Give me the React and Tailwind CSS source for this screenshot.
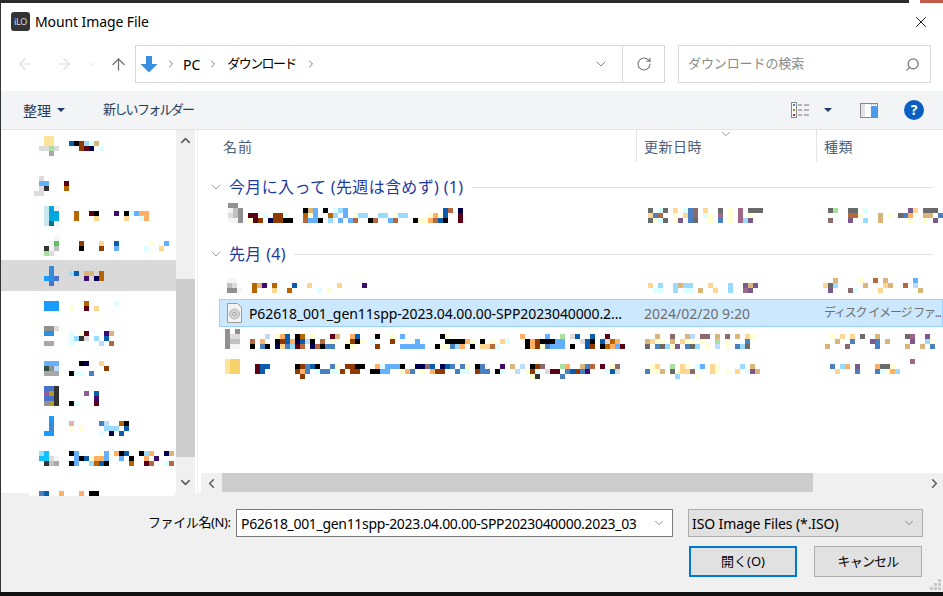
import React from 'react';
import { ArrowLeft, ArrowRight, ArrowUp, ChevronDown, ChevronRight, ChevronLeft, ChevronUp, RotateCw, Search, X } from 'lucide-react';

const PAL = {
  k: '#000000', b: '#0b5cad', l: '#9adcff', c: '#dcffff', o: '#b86400', r: '#8f3b00', m: '#5c0018',
  p: '#ffd592', y: '#ffffd6', n: '#00004f', s: '#64b0ff', t: '#b5673f', T: '#d9b57a', P: '#ffb066',
  g: '#a8a8a8', G: '#dcdcdc', d: '#333333', e: '#a8e0a0', v: '#3f0a6e', S: '#4a7fc0', L: '#bcdcff',
  D: '#6a6a6a', B: '#8a6a6a', M: '#a0668a', V: '#7a5a8a',
  1: '#f5f5f5', 2: '#c0c0c0', 3: '#909090', 4: '#2a90e0', 5: '#00a8e0', 6: '#c8e8f0', 7: '#0a7090',
  8: '#ffe49a', 9: '#f7d26a', a: '#3a8ad8', f: '#1a9cff', h: '#2f4f3f', i: '#dbb4b4', j: '#b39a20',
  q: '#8e5e9c', u: '#4a72c8', x: '#60c060', z: '#10c0ff',
};

const Pixels = ({ rows, className = '' }) => (
  <div className={`shrink-0 ${className}`}>
    {rows.map((row, i) => (
      <div key={i} className="flex h-[5px]">
        {[...row].map((c, j) => (
          <span key={j} className="w-[5px] h-[5px] shrink-0" style={c === '.' ? undefined : { background: PAL[c] }} />
        ))}
      </div>
    ))}
  </div>
);

const NAV_ROWS = [
  { h: 'h-[46px]', icon: ['.88.', '.88.', 'GGeG', '..g.'], iconCls: 'mt-[6px] ml-[38px]', text: ['bkrlcT.', '..rmn.c'], textCls: 'mt-[11px] ml-[10px]' },
  { h: 'h-[30px]', icon: ['.G.', '.ss', '.Gd', 'GG.'], iconCls: 'ml-[33px]', text: ['m', 'o'], textCls: 'mt-[5px] ml-[15px]' },
  { h: 'h-[30px]', icon: ['651', '655', '655', '671'], iconCls: 'ml-[43px]', text: ['o..mk...v.kcsPP', 'o...p.....p..cP'], textCls: 'mt-[5px] ml-[15px]' },
  { h: 'h-[24px]', icon: ['..1', '.1x', 'd12', 'eG.'], iconCls: 'ml-[43px]', text: ['r...p..b......y..s', 'k...r..s.....c..p.'], textCls: 'mt-[5px] ml-[20px]' },
  { h: 'h-[31px]', selected: true, icon: ['.a.', '.a.', 'f4u', '.u.'], iconCls: 'mt-[6px] ml-[43px]', text: ['lb.TT.o', '...v.no'], textCls: 'mt-[11px] ml-[10px]' },
  { h: 'h-[35px]', icon: ['fff', 'fff'], iconCls: 'mt-[10px] ml-[43px]', text: ['...o.....c', 'y..m.p....'], textCls: 'mt-[10px] ml-[10px]' },
  { h: 'h-[35px]', icon: ['33G', '44.', '...', 'gg.'], iconCls: 'ml-[43px]', text: ['c.ym...vT', 'cldG.l.b.', 'c.....L.t'], textCls: 'mt-[5px] ml-[10px]' },
  { h: 'h-[25px]', icon: ['sss', 'h3L', 'ggg'], iconCls: 'ml-[43px]', text: ['..kn..p.', '.......r', 'kcc.S...'], textCls: 'ml-[10px]' },
  { h: 'h-[30px]', icon: ['uud', 'qjd', 'uud', '3jd'], iconCls: 'ml-[43px]', text: ['...q.b', '.....v', 'kc...m'], textCls: 'mt-[5px] ml-[10px]' },
  { h: 'h-[35px]', icon: ['.f.', '.a.', '.a.', 'ff.'], iconCls: 'ml-[43px]', text: ['i.....SL..ok', 'y.y....lll.b', '......c.n.b.'], textCls: 'mt-[5px] ml-[10px]' },
  { h: 'h-[40px]', icon: ['lz..', 'zzG1', '.d2g'], iconCls: 'ml-[38px]', text: ['ks....ys.Pkb..klP..nT', '.skbyPPs..s.k..P.v...', 'ks..lobk....o..mt..ct'], textCls: 'ml-[10px]' },
];

const FILE_ROWS = {
  first: {
    icon: ['33.', '123', 'G23', '113'],
    name: [
      '...........kTs.k.cls...................bt.n',
      'mm.c.rrc...oys..ol.s.yll..ll.yll....yPyb..m',
      'ymr.nrrkk..tssk.l.s.st..kt..st...kyyPtbk..m',
    ],
    date: ['D.cD.p.cSB.p..D.y.M.DDD', 'pSt..y.pSB.cy.M.y.M.y..', 'DycD.yV.SD..y.S.y.MlV..'],
    type: ['De..DD.c........Vp.DDD', '....tty...T.y.DSP..TT.S', 'B...V..l..T.....y..y.V'],
  },
  second: {
    icon: ['11.', '2G.', '331'],
    name: ['oTv.o...b..p.....p....v', 'o...p..o.....c.y.......'],
    date: ['p.l..lTll...p...l..VTV', '.cc..l.cc.T..p..l..MV.'],
    type: ['..T....y..t.T.....s', 'pDl.....T...pT..t.L', '.V...Bc....p.......T'],
  },
  third: {
    icon: ['3.3', '3GG', '322', '311'],
    name: [
      '...L.yPb.ko.y...mT..Pb...k..y.s.......ky..............P....s..e.Gb..b..m',
      't.P..krbPnbLk.t.y..yrky.c...r....s.....kkkkPy.k.y.pc...kPrkkkss...Gbk.bGoP',
      'k.Sk.npSlmt.ntkSS..ky....r....sssss..kyySlP.k.pptc.....kPrySsss.k..br.koPsm',
    ],
    date: ['..T..B..TL.BB.T.B.T.py', 'Tpyy.T.pyy.y..e.y...S', 'D.SDlyV.SDl.y.L.y.SlD'],
    type: ['.y.p.p.D..T.....DM..V', '..T..S...VS.T....V..ly', 'T...B.....S.....T..T.S'],
  },
  fourth: {
    icon: ['899', '899', '899'],
    name: [
      'mbb.....krSbk..Sy.rrkk..Pcsssk..nnBb.nbS.Sy.kS...v.T.L.krB...eP..TSt.m.yB',
      'mb......rPS.cSSccr.rr..kkss..yPS.y.Prr..Scc.rSS.kc..L.yrc.Gmm.SbrSv...cbG',
      '.........r.............................................yd....S',
    ],
    date: ['.yp..e.py.cs.py....l.T', 'SyyT.DyppB...py.y.p.cVT', '......l...y'],
    type: ['................M', 'S.lP.V...PDDy', '.p...S...ScyPl'],
  },
};

const FileRow = ({ row, cls }) => (
  <div className="h-[27px] flex items-start shrink-0">
    <div className="w-[437px] flex items-start shrink-0">
      <Pixels rows={row.icon} className={cls.icon} />
      <Pixels rows={row.name} className={cls.name} />
    </div>
    <div className="w-[180px] shrink-0"><Pixels rows={row.date} className={cls.date} /></div>
    <div className="flex-1 min-w-0 overflow-hidden"><Pixels rows={row.type} className={cls.type} /></div>
  </div>
);

const GroupHeader = ({ label, className = '' }) => (
  <div className={`flex items-center pl-[9px] shrink-0 ${className}`}>
    <ChevronDown size={16} strokeWidth={1} className="text-[#6d6d6d] shrink-0" />
    <span className="ml-[5px] text-[16px] tracking-[0.35px] text-[#1e3a9e] whitespace-nowrap">{label}</span>
    <div className="ml-[8px] h-px flex-1 bg-[#e2e2e2] mr-[10px]" />
  </div>
);

const LogoIcon = () => (
  <div className="w-[19px] h-[19px] rounded-[3px] bg-[#333] flex items-center justify-center text-[9px] text-[#ddd] tracking-tight leading-none">iLO</div>
);

const DownloadArrow = () => (
  <svg width="18" height="18" viewBox="0 0 18 18" className="shrink-0">
    <path d="M6 1h6v8h5.5L9 17.5.5 9H6z" fill="#3a8fe0" />
  </svg>
);

const ViewsIcon = () => (
  <svg width="19" height="16" viewBox="0 0 19 16">
    <rect x="0.5" y="0.5" width="5" height="15" fill="#fff" stroke="#888" />
    <rect x="2" y="2" width="2" height="2" fill="#3a8fd0" />
    <rect x="2" y="7" width="2" height="2" fill="#8a8a30" />
    <rect x="2" y="12" width="2" height="2" fill="#b03020" />
    <path d="M7 3h4M13 3h5M7 8h4M13 8h5M7 13h4M13 13h5" stroke="#777" />
  </svg>
);

const PreviewIcon = () => (
  <svg width="18" height="15" viewBox="0 0 18 15">
    <rect x="0.5" y="0.5" width="17" height="14" fill="#fff" stroke="#888" />
    <rect x="1" y="1" width="4" height="13" fill="#e3e3e3" />
    <rect x="11" y="3" width="6" height="11" fill="#4a9be8" />
    <path d="M11 1.5h6" stroke="#8fb8e0" strokeDasharray="1 1" />
  </svg>
);

const DiscFile = () => (
  <svg width="15" height="20" viewBox="0 0 15 20" className="shrink-0">
    <path d="M.5.5h10l4 4v15H.5z" fill="#f4f4f4" stroke="#9a9a9a" />
    <circle cx="7.5" cy="11" r="5" fill="#d4d4d4" stroke="#b5b5b5" />
    <circle cx="7.5" cy="11" r="1.6" fill="#f4f4f4" stroke="#999" />
  </svg>
);

const Caret = ({ className = '' }) => (
  <svg width="8" height="4" viewBox="0 0 8 4" className={className}>
    <path d="M0 0h8L4 4z" fill="#1f3a66" />
  </svg>
);

const Grip = () => (
  <svg width="12" height="12" viewBox="0 0 12 12" className="absolute right-[1px] bottom-[1px]">
    <path d="M8 0h3v3H8zM4 4h3v3H4zM8 4h3v3H8zM0 8h3v3H0zM4 8h3v3H4zM8 8h3v3H8z" fill="#c8c8c8" />
  </svg>
);

export default function App() {
  return (
    <div className="w-[943px] h-[596px] overflow-hidden flex flex-col bg-white text-black font-['Noto_Sans','Noto_Sans_CJK_JP',sans-serif]">
      {/* window behind */}
      <div className="h-[3px] shrink-0 flex bg-[#2b2b2b]">
        <div className="flex-1" />
        <div className="w-[11px] bg-white" />
        <div className="w-[23px] bg-[#c4594a]" />
      </div>

      <div className="flex-1 min-h-0 flex flex-col border-l border-[#333]">
        {/* Title bar */}
        <div className="h-[38px] shrink-0 flex items-center pl-[10px] pr-[13px] pb-[1px]">
          <LogoIcon />
          <span className="ml-[5px] text-[14px] tracking-[-0.1px]">Mount Image File</span>
          <X size={18} strokeWidth={1.2} className="ml-auto" />
        </div>

        {/* Navigation bar */}
        <div className="h-[50px] shrink-0 flex items-start pt-[4px]">
          <div className="w-[134px] h-[38px] flex items-center shrink-0">
            <ArrowLeft size={18} strokeWidth={1.5} className="ml-[15px] text-[#dcdcdc]" />
            <ArrowRight size={18} strokeWidth={1.5} className="ml-[21px] text-[#dcdcdc]" />
            <ChevronDown size={11} strokeWidth={1.5} className="ml-[14px] text-[#dcdcdc]" />
            <ArrowUp size={19} strokeWidth={1.6} className="ml-[11px] text-[#707070]" />
          </div>
          <div className="w-[530px] h-[38px] border border-[#d9d9d9] flex items-center shrink-0">
            <div className="ml-[4px]"><DownloadArrow /></div>
            <ChevronRight size={12} strokeWidth={1.8} className="ml-[7px] text-[#707070]" />
            <span className="ml-[6px] text-[14px]">PC</span>
            <ChevronRight size={12} strokeWidth={1.8} className="ml-[7px] text-[#707070]" />
            <span className="ml-[8px] text-[13px] tracking-[-1.6px] whitespace-nowrap">ダウンロード</span>
            <ChevronRight size={12} strokeWidth={1.8} className="ml-[9px] text-[#707070]" />
            <ChevronDown size={16} strokeWidth={1.3} className="ml-auto mr-[13px] text-[#707070]" />
            <div className="w-[42px] h-full border-l border-[#d9d9d9] flex items-center justify-center">
              <RotateCw size={16} strokeWidth={1.6} className="text-[#777]" />
            </div>
          </div>
          <div className="ml-[13px] w-[253px] h-[38px] border border-[#d9d9d9] flex items-center px-[9px] shrink-0">
            <span className="text-[13px] tracking-[-0.1px] text-[#8a8a8a] whitespace-nowrap">ダウンロードの検索</span>
            <Search size={15} strokeWidth={2} className="ml-auto mr-[1px] text-[#777] -scale-x-100" />
          </div>
        </div>

        {/* Toolbar */}
        <div className="h-[39px] shrink-0 flex items-center bg-[#f3f4f6] border-b border-[#e3e3e3] text-[#1f3a5a]">
          <span className="ml-[22px] text-[14px]">整理</span>
          <Caret className="ml-[6px]" />
          <span className="ml-[38px] text-[13px] tracking-[-1.7px] whitespace-nowrap">新しいフォルダー</span>
          <div className="ml-auto flex items-center">
            <ViewsIcon />
            <Caret className="ml-[14px]" />
            <div className="ml-[28px]"><PreviewIcon /></div>
            <div className="ml-[26px] mr-[19px] w-[20px] h-[20px] rounded-full bg-[#0a5fc0] text-white text-[14px] font-bold flex items-center justify-center leading-none">?</div>
          </div>
        </div>

        {/* Body */}
        <div className="h-[363px] shrink-0 flex">
          {/* Nav pane */}
          <div className="w-[175px] shrink-0 bg-white">
            {NAV_ROWS.map((r, i) => (
              <div key={i} className={`${r.h} flex items-start overflow-hidden ${r.selected ? 'bg-[#d9d9d9]' : ''}`}>
                <Pixels rows={r.icon} className={r.iconCls} />
                <Pixels rows={r.text} className={r.textCls} />
              </div>
            ))}
            <div className="relative z-10 h-[5px] ml-[28px] w-[146px] bg-white">
              <Pixels rows={['Sb..P...P.kk']} className="ml-[10px]" />
            </div>
          </div>

          {/* Nav scrollbar */}
          <div className="w-[19px] shrink-0 bg-[#f0f0f0] flex flex-col items-center">
            <div className="h-[20px] flex items-center"><ChevronUp size={15} strokeWidth={2.6} className="text-[#606060]" /></div>
            <div className="h-[129px]" />
            <div className="h-[178px] w-full bg-[#cdcdcd]" />
            <div className="flex-1 flex items-end pb-[3px]"><ChevronDown size={15} strokeWidth={2.6} className="text-[#606060]" /></div>
          </div>
          <div className="w-[3px] shrink-0 border-r border-[#f0f0f0] mr-[1px]" />

          {/* File pane */}
          <div className="flex-1 min-w-0 flex flex-col">
            <div className="h-[32px] shrink-0 flex relative">
              <div className="w-[437px] pl-[24px] text-[14px] text-[#4c607a] flex items-center tracking-[1px]">名前</div>
              <div className="w-[180px] border-l border-[#e5e5e5] pl-[7px] text-[14px] text-[#4c607a] flex items-center tracking-[0.5px]">更新日時</div>
              <div className="flex-1 border-l border-[#e5e5e5] pl-[7px] text-[14px] text-[#4c607a] flex items-center tracking-[0.5px]">種類</div>
              <ChevronDown size={14} strokeWidth={1} className="absolute left-[520px] -top-[3px] text-[#555]" />
            </div>
            <div className="flex-1 min-h-0 flex flex-col overflow-hidden">
              <GroupHeader label="今月に入って (先週は含めず) (1)" className="h-[28px] mt-[11px]" />
              <FileRow row={FILE_ROWS.first} cls={{ icon: 'ml-[29px] mt-[2px]', name: 'ml-[5px] mt-[7px]', date: 'ml-[12px] mt-[7px]', type: 'ml-[12px] mt-[7px]' }} />
              <GroupHeader label="先月 (4)" className="h-[28px] mt-[12px]" />
              <div className="h-[4px] shrink-0" />
              <FileRow row={FILE_ROWS.second} cls={{ icon: 'ml-[28px] mt-[6px]', name: 'ml-[10px] mt-[11px]', date: 'ml-[12px] mt-[11px]', type: 'ml-[7px] mt-[6px]' }} />
              <div className="ml-[20px] h-[28px] shrink-0 flex items-center bg-[#cce8ff] border border-[#99d1ff] whitespace-nowrap text-[14px]">
                <div className="w-[417px] flex items-center shrink-0">
                  <div className="ml-[7px]"><DiscFile /></div>
                  <span className="ml-[7px] tracking-[-0.1px]">P62618_001_gen11spp-2023.04.00.00-SPP2023040000.2...</span>
                </div>
                <span className="w-[180px] pl-[7px] text-[#6d6d6d] shrink-0">2024/02/20 9:20</span>
                <span className="pl-[7px] text-[#6d6d6d] text-[12px] tracking-[-1.2px]">ディスク イメージ ファ...</span>
              </div>
              <FileRow row={FILE_ROWS.third} cls={{ icon: 'ml-[26px] mt-[2px]', name: 'ml-[10px] mt-[7px]', date: 'ml-[9px] mt-[7px]', type: 'ml-[9px] mt-[7px]' }} />
              <FileRow row={FILE_ROWS.fourth} cls={{ icon: 'ml-[26px] mt-[5px]', name: 'ml-[15px] mt-[10px]', date: 'ml-[9px] mt-[10px]', type: 'ml-[14px] mt-[5px]' }} />
            </div>
            {/* Horizontal scrollbar */}
            <div className="h-[20px] shrink-0 ml-[2px] flex bg-[#f0f0f0]">
              <div className="w-[21px] flex items-center justify-center"><ChevronLeft size={15} strokeWidth={2.6} className="text-[#606060]" /></div>
              <div className="w-[591px] h-[19px] bg-[#cdcdcd]" />
              <div className="flex-1 flex items-center justify-end pr-[1px]"><ChevronRight size={15} strokeWidth={2.6} className="text-[#606060]" /></div>
            </div>
          </div>
        </div>

        {/* Footer */}
        <div className="flex-1 min-h-0 bg-[#f0f0f0] relative pt-[16px]">
          <div className="flex items-center h-[28px]">
            <span className="ml-[147px] w-[88px] text-[13px] tracking-[-0.4px] whitespace-nowrap">ファイル名(N):</span>
            <div className="w-[437px] h-[28px] bg-white border border-[#7a7a7a] flex items-center pl-[4px] text-[14px] whitespace-nowrap shrink-0">
              <span className="tracking-[-0.32px]">P62618_001_gen11spp-2023.04.00.00-SPP2023040000.2023_03</span>
              <ChevronDown size={14} strokeWidth={1} className="ml-auto mr-[6px] text-[#444]" />
            </div>
            <div className="ml-[15px] w-[235px] h-[28px] bg-[#e1e1e1] border border-[#adadad] flex items-center pl-[3px] text-[14px] tracking-[-0.1px] whitespace-nowrap shrink-0">
              <span>ISO Image Files (*.ISO)</span>
              <ChevronDown size={14} strokeWidth={1} className="ml-auto mr-[6px] text-[#444]" />
            </div>
          </div>
          <div className="flex mt-[9px] ml-[688px]">
            <button className="w-[108px] h-[31px] bg-[#e1e1e1] border-2 border-[#0078d7] text-[13px] flex items-center justify-center">開く(O)</button>
            <button className="ml-[17px] w-[108px] h-[31px] bg-[#e1e1e1] border border-[#adadad] text-[13px] tracking-[-0.8px] flex items-center justify-center">キャンセル</button>
          </div>
          <Grip />
        </div>
      </div>
      <div className="h-[4px] shrink-0 bg-[#111]" />
    </div>
  );
}
